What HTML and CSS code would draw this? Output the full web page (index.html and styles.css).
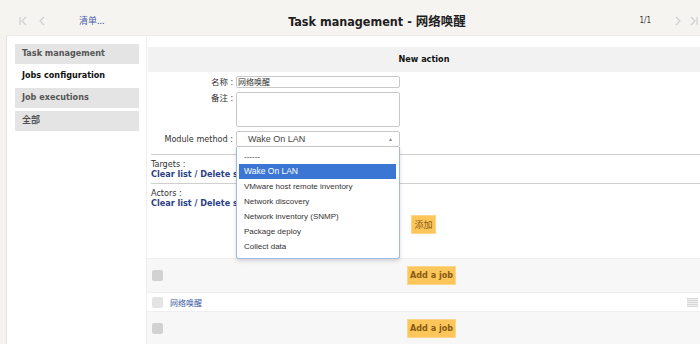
FILE: index.html
```html
<!DOCTYPE html>
<html>
<head>
    <meta charset="utf-8">
    <title>Task management - 网络唤醒</title>
    <link rel="stylesheet" href="styles.css">
</head>
<body>
    <div class="topbar">
        <div class="nav">
            <svg width="8" height="10" viewBox="0 0 8 10"><path d="M1 1v8M7 1L3 5l4 4" fill="none" stroke="#cfcfcf" stroke-width="1.2"/></svg>
            <svg width="6" height="10" viewBox="0 0 6 10"><path d="M5 1L1 5l4 4" fill="none" stroke="#cfcfcf" stroke-width="1.2"/></svg>
        </div>
        <a class="list-link" href="#">清单...</a>
        <div class="page-title">Task management - 网络唤醒</div>
        <div class="pager">1/1</div>
        <div class="nav nav-right">
            <svg width="6" height="10" viewBox="0 0 6 10"><path d="M1 1l4 4-4 4" fill="none" stroke="#cfcfcf" stroke-width="1.2"/></svg>
            <svg width="8" height="10" viewBox="0 0 8 10"><path d="M1 1l4 4-4 4M7 1v8" fill="none" stroke="#cfcfcf" stroke-width="1.2"/></svg>
        </div>
    </div>

    <div class="panel">
        <div class="sidebar">
            <div class="menu-item">Task management</div>
            <div class="menu-item active">Jobs configuration</div>
            <div class="menu-item">Job executions</div>
            <div class="menu-item">全部</div>
        </div>

        <div class="main">
            <div class="section-header">New action</div>

            <div class="form">
                <label>名称 :</label>
                <div class="input">网络唤醒</div>
                <label>备注 :</label>
                <div class="textarea"></div>
                <label>Module method :</label>
                <div class="select-wrap">
                    <div class="select">
                        <span>Wake On LAN</span>
                        <span class="arrow">▲</span>
                    </div>
                    <ul class="dropdown">
                        <li>------</li>
                        <li class="selected">Wake On LAN</li>
                        <li>VMware host remote inventory</li>
                        <li>Network discovery</li>
                        <li>Network inventory (SNMP)</li>
                        <li>Package deploy</li>
                        <li>Collect data</li>
                    </ul>
                </div>
            </div>

            <div class="list-block">
                <div class="list-title">Targets :</div>
                <a class="list-actions" href="#">Clear list / Delete selection</a>
            </div>
            <div class="list-block last">
                <div class="list-title">Actors :</div>
                <a class="list-actions" href="#">Clear list / Delete selection</a>
            </div>

            <div class="add-row">
                <span class="btn">添加</span>
            </div>

            <div class="jobs">
                <div class="job-row grey">
                    <span class="check"></span>
                    <div class="job-cell"><span class="btn btn-bold">Add a job</span></div>
                </div>
                <div class="job-row">
                    <span class="check light"></span>
                    <a class="job-name" href="#">网络唤醒</a>
                    <span class="handle"></span>
                </div>
                <div class="job-row grey">
                    <span class="check"></span>
                    <div class="job-cell"><span class="btn btn-bold">Add a job</span></div>
                </div>
            </div>
        </div>
    </div>
</body>
</html>
```

FILE: styles.css
```css
html, body {
    margin: 0;
    padding: 0;
    height: 100%;
    overflow: hidden;
}

body {
    background-color: #f5f4f1;
    font-family: "DejaVu Sans Condensed", "DejaVu Sans", "Noto Sans CJK SC", sans-serif;
    font-size: 10px;
    color: #333;
}

.topbar {
    height: 29px;
    padding-top: 6px;
    display: flex;
    align-items: center;
}

.nav {
    display: flex;
    align-items: center;
    gap: 12px;
    padding-left: 19px;
    width: 40px;
}

.nav-right {
    padding-left: 24px;
    padding-right: 2px;
    gap: 9px;
    width: auto;
}

.list-link {
    margin-left: 20px;
    color: #4a5ea8;
    font-size: 9px;
    text-decoration: none;
    font-family: "Noto Sans CJK SC", sans-serif;
}

.page-title {
    flex: 1;
    text-align: center;
    font-weight: bold;
    font-size: 12.5px;
    color: #1e1e1e;
    padding-left: 10px;
}

.pager {
    font-size: 8px;
    color: #333;
}

.panel {
    margin-left: 6px;
    height: 309px;
    background: #fff;
    border-left: 1px solid #e6e3dc;
    border-top: 1px solid #ecebe7;
    display: flex;
}

.sidebar {
    width: 124px;
    padding: 8px 0 0 8px;
    flex-shrink: 0;
}

.menu-item {
    height: 20px;
    line-height: 19px;
    padding-left: 7px;
    margin-bottom: 2px;
    background: #e4e4e4;
    font-weight: bold;
    font-size: 9px;
    color: #555;
}

.menu-item.active {
    background: none;
    color: #111;
}

.menu-item:nth-child(3) {
    margin-bottom: 3px;
}

.main {
    flex: 1;
    margin-left: 7px;
    padding-top: 11px;
    border-left: 1px solid #eeeeee;
}

.section-header {
    height: 25px;
    line-height: 25px;
    background: #f2f2f2;
    text-align: center;
    font-weight: bold;
    font-size: 9px;
    color: #111;
    margin-left: 1px;
}

.form {
    display: grid;
    grid-template-columns: 82px 164px;
    column-gap: 3px;
    row-gap: 4px;
    padding-top: 4px;
    padding-bottom: 7px;
    border-bottom: 1px solid #cfcfcf;
    margin-left: 4px;
}

.form label {
    text-align: right;
    font-size: 8.5px;
    color: #333;
    line-height: 12px;
}

.form label:nth-of-type(3) {
    line-height: 16px;
    font-size: 9px;
}

.input {
    height: 10px;
    border: 1px solid #c9c9c9;
    border-radius: 2px;
    font-size: 8px;
    line-height: 10px;
    padding-left: 1px;
    color: #333;
    font-family: "Noto Sans CJK SC", sans-serif;
}

.textarea {
    height: 33px;
    border: 1px solid #c9c9c9;
    border-radius: 2px;
}

.select-wrap {
    position: relative;
}

.select {
    height: 14px;
    border: 1px solid #c9c9c9;
    border-radius: 2px;
    display: flex;
    justify-content: space-between;
    align-items: center;
    padding: 0 6px 0 11px;
    font-family: "Liberation Sans", sans-serif;
    font-size: 9px;
    color: #444;
}

.arrow {
    font-size: 5px;
    color: #888;
}

.dropdown {
    position: absolute;
    left: 0;
    top: 16px;
    width: 162px;
    margin: 0;
    padding: 2px 0 4px 0;
    list-style: none;
    background: #fff;
    border: 1px solid #9db9e6;
    border-top: none;
    border-radius: 0 0 3px 3px;
    box-shadow: 0 2px 4px rgba(0, 0, 0, 0.15);
    font-family: "Liberation Sans", sans-serif;
    font-size: 8px;
    color: #333;
    z-index: 2;
}

.dropdown li {
    height: 15px;
    line-height: 15px;
    padding-left: 5px;
    margin: 0 3px 0 2px;
}

.dropdown li.selected {
    background: #3b76d4;
    color: #fff;
    font-size: 8.5px;
}

.list-block {
    margin-left: 4px;
    padding: 4px 0;
    border-bottom: 1px solid #cfcfcf;
    white-space: nowrap;
}

.list-block.last {
    border-bottom: none;
}

.list-title {
    font-size: 9px;
    line-height: 10px;
    color: #333;
}

.list-actions {
    display: block;
    font-weight: bold;
    font-size: 9px;
    line-height: 10px;
    color: #2a4184;
    text-decoration: none;
}

.add-row {
    text-align: center;
    padding: 3px 0 24px 0;
    border-bottom: 1px solid #f0f0f0;
}

.btn {
    display: inline-block;
    background: #fdc65a;
    border: 1px solid #fdd68c;
    color: #875b12;
    font-family: "Noto Sans CJK SC", sans-serif;
    font-size: 9px;
    line-height: 17px;
    padding: 0 2px;
}

.btn-bold {
    font-family: "DejaVu Sans Condensed", "DejaVu Sans", sans-serif;
    font-weight: bold;
    font-size: 9px;
    padding: 0 2px;
}

.job-row {
    display: flex;
    align-items: center;
    height: 18px;
    border-bottom: 1px solid #efefef;
    padding-left: 5px;
}

.job-row.grey {
    height: 33px;
    background: #f7f7f7;
}

.check {
    width: 11px;
    height: 11px;
    border-radius: 2px;
    background: #d2d2d2;
    flex-shrink: 0;
}

.check.light {
    background: #e4e4e4;
}

.job-cell {
    flex: 1;
    text-align: center;
}

.job-name {
    flex: 1;
    margin-left: 7px;
    color: #3c5aa6;
    font-family: "Noto Sans CJK SC", sans-serif;
    font-size: 8px;
    text-decoration: none;
}

.handle {
    width: 11px;
    height: 9px;
    margin-right: 2px;
    background: repeating-linear-gradient(#d6d6d6 0, #d6d6d6 1px, #f0f0f0 1px, #f0f0f0 2px);
}
```
